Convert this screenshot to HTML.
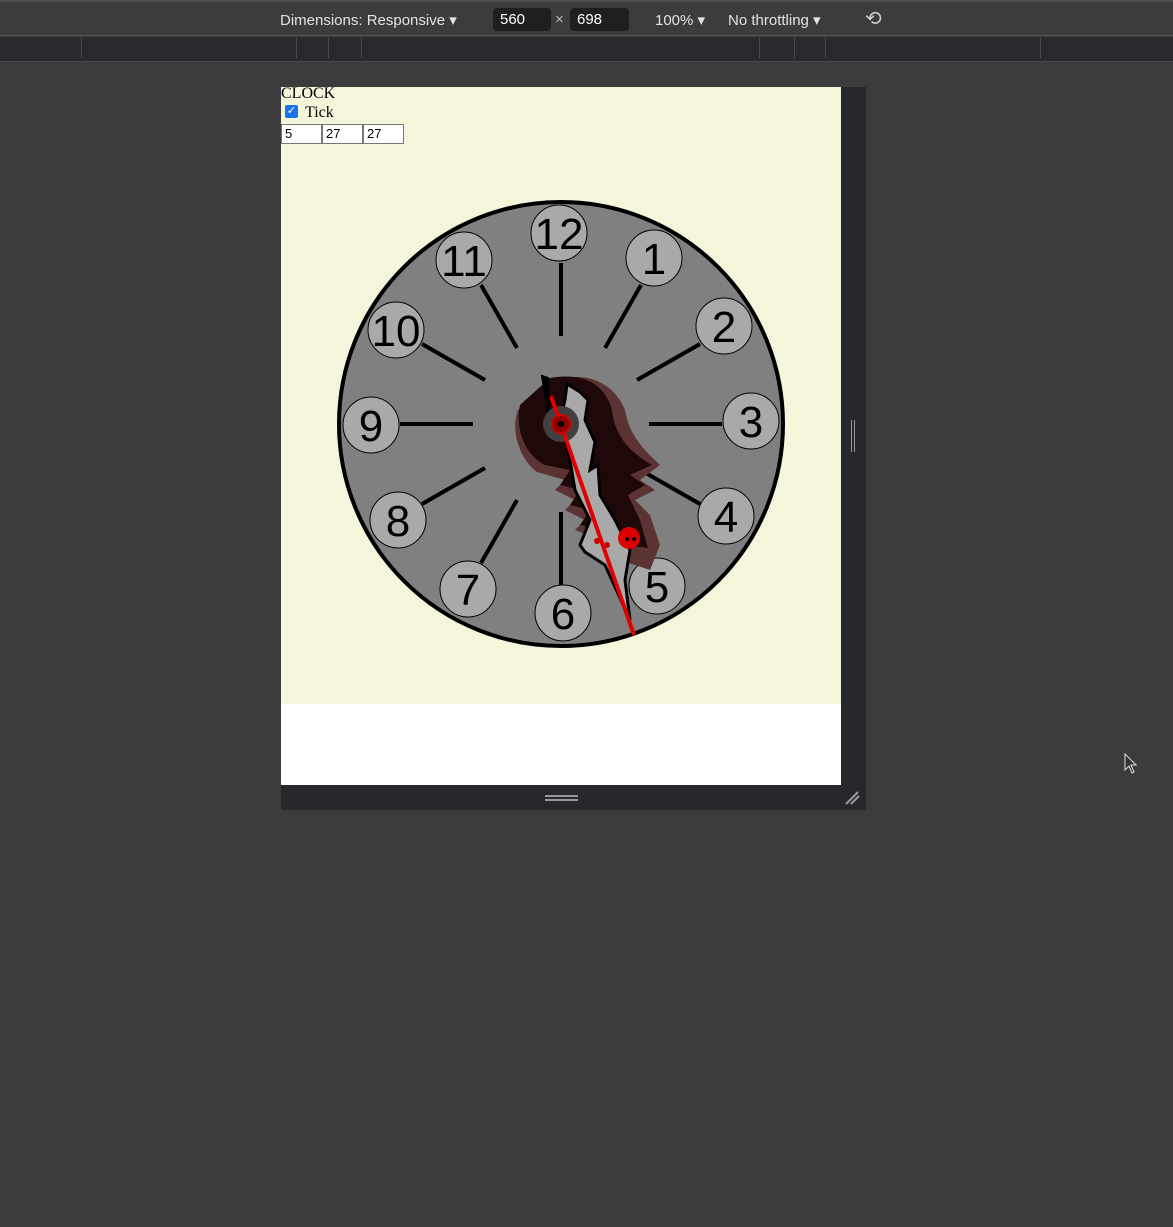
<!DOCTYPE html>
<html><head><meta charset="utf-8"><style>
body{margin:0;width:1173px;height:1227px;background:#3c3c3c;position:relative;overflow:hidden;font-family:"Liberation Sans",sans-serif}
.top{position:absolute;left:0;top:0;width:1173px;height:36px;background:#3c3c3c;border-top:2px solid #505050;box-sizing:border-box;border-bottom:1px solid #555}
.bar2{position:absolute;left:0;top:37px;width:1173px;height:24px;background:#292a2d;border-bottom:1px solid #4a4a4a}
.v{position:absolute;top:37px;width:1px;height:21px;background:#4a4a4a}
.t{position:absolute;top:11px;color:#e3e3e3;font-size:15px}
.box{position:absolute;top:8px;height:23px;background:#1f1f1f;border-radius:4px;color:#fff;font-size:15px;line-height:23px;padding-left:7px;box-sizing:border-box}
.page{position:absolute;left:281px;top:87px;width:560px;height:698px;background:#fff}
.beige{position:absolute;left:0;top:0;width:560px;height:617px;background:#f5f5dc}
.gut{position:absolute;left:841px;top:87px;width:25px;height:723px;background:#27282b}
.gutb{position:absolute;left:281px;top:785px;width:585px;height:25px;background:#27282b}
.in{position:absolute;top:37px;width:41px;height:20px;border:1px solid #767676;box-sizing:border-box;background:#fff;font:13px "Liberation Sans",sans-serif;padding-left:3px;line-height:18px}
</style></head><body>
<div class="top"></div>
<div class="bar2"></div>
<div class="v" style="left:81px"></div><div class="v" style="left:296px"></div><div class="v" style="left:328px"></div><div class="v" style="left:361px"></div><div class="v" style="left:759px"></div><div class="v" style="left:794px"></div><div class="v" style="left:825px"></div><div class="v" style="left:1040px"></div>
<div class="t" style="left:280px">Dimensions: Responsive ▾</div>
<div class="box" style="left:493px;width:58px">560</div>
<div class="t" style="left:555px;color:#bbb">×</div>
<div class="box" style="left:570px;width:59px">698</div>
<div class="t" style="left:655px">100% ▾</div>
<div class="t" style="left:728px">No throttling ▾</div>
<div class="t" style="left:865px;font-size:20px;top:6px;color:#ccc">⟲</div>
<div class="gut"></div><div class="gutb"></div>
<div style="position:absolute;left:851px;top:420px;width:2px;height:32px;border-left:1px solid #999;border-right:1px solid #999"></div>
<div style="position:absolute;left:545px;top:795px;width:33px;height:1px;border-top:2px solid #999;border-bottom:2px solid #999;height:2px"></div>
<div class="page"><div class="beige"></div>
<div style="position:absolute;left:0;top:-2px;font:16px 'Liberation Serif',serif;color:#000">CLOCK</div>
<div style="position:absolute;left:4px;top:18px;width:13px;height:13px;background:#1a73e8;border-radius:2px;color:#fff;font-size:11px;line-height:13px;text-align:center">✓</div>
<div style="position:absolute;left:24px;top:17px;font:16px 'Liberation Serif',serif">Tick</div>
<div class="in" style="left:0">5</div><div class="in" style="left:41px">27</div><div class="in" style="left:82px">27</div>
</div>
<svg style="position:absolute;left:0;top:0" width="1173" height="1227">
<circle cx="561" cy="424" r="222" fill="#808080" stroke="#000" stroke-width="4"/>
<g stroke="#000" stroke-width="4">
<line x1="561" y1="336" x2="561" y2="263"/><line x1="605" y1="348" x2="641" y2="285"/><line x1="637" y1="380" x2="700" y2="344"/><line x1="649" y1="424" x2="722" y2="424"/><line x1="637" y1="468" x2="700" y2="504"/><line x1="605" y1="500" x2="641" y2="563"/><line x1="561" y1="512" x2="561" y2="585"/><line x1="517" y1="500" x2="481" y2="563"/><line x1="485" y1="468" x2="422" y2="504"/><line x1="473" y1="424" x2="400" y2="424"/><line x1="485" y1="380" x2="422" y2="344"/><line x1="517" y1="348" x2="481" y2="285"/>
</g>
<g fill="#a9a9a9" stroke="#000" stroke-width="1">
<circle cx="559" cy="233" r="28"/><circle cx="654" cy="258" r="28"/><circle cx="724" cy="326" r="28"/><circle cx="751" cy="421" r="28"/><circle cx="726" cy="516" r="28"/><circle cx="657" cy="586" r="28"/><circle cx="563" cy="613" r="28"/><circle cx="468" cy="589" r="28"/><circle cx="398" cy="520" r="28"/><circle cx="371" cy="425" r="28"/><circle cx="396" cy="330" r="28"/><circle cx="464" cy="260" r="28"/>
</g>
<g font-family="Liberation Sans,sans-serif" font-size="44" text-anchor="middle" fill="#000">
<text x="559" y="249">12</text><text x="654" y="274">1</text><text x="724" y="342">2</text><text x="751" y="437">3</text><text x="726" y="532">4</text><text x="657" y="602">5</text><text x="563" y="629">6</text><text x="468" y="605">7</text><text x="398" y="536">8</text><text x="371" y="441">9</text><text x="396" y="346">10</text><text x="464" y="276">11</text>
</g>
<path d="M545 385 C575 370 610 375 625 410 C630 440 650 455 660 465 L640 480 L655 490 L635 500 L650 515 L660 545 L650 570 L620 560 L600 540 L575 530 L585 520 L565 510 L575 500 L555 490 L565 480 L537 472 C520 460 510 430 518 410 Z" fill="#5c3333"/>
<path d="M550 378 C585 372 605 385 612 410 C615 440 635 455 652 465 L630 475 L645 485 L628 495 L640 520 L648 548 L625 545 L600 530 L580 525 L590 510 L570 505 L580 490 L560 485 L570 470 L545 465 C525 455 515 430 520 405 Z" fill="#1f0808"/>
<path d="M542 376 L549 420 L548 378 Z" fill="#000" stroke="#000" stroke-width="2"/>
<path d="M567 384 L580 392 L588 400 L585 420 L595 442 L590 470 L598 465 L600 495 L615 520 L630 550 L625 580 L630 620 L605 565 L585 552 L580 545 L590 520 L575 490 L570 460 L560 420 L565 400 Z" fill="#a9a9a9" stroke="#000" stroke-width="3"/>
<circle cx="561" cy="424" r="18" fill="#404040"/>
<line x1="551" y1="396" x2="634" y2="635" stroke="#e00000" stroke-width="4"/>
<circle cx="561" cy="424" r="9" fill="#8b0000" stroke="#c00" stroke-width="2"/>
<circle cx="561" cy="424" r="3" fill="#000"/>
<circle cx="629" cy="538" r="11" fill="#d00"/><circle cx="627" cy="539" r="2" fill="#000"/><circle cx="634" cy="539" r="2" fill="#000"/>
<circle cx="597" cy="541" r="3" fill="#c00"/><circle cx="607" cy="545" r="3" fill="#c00"/>
<path d="M846 804 L858 792 M851 804 L859 796" stroke="#999" stroke-width="2"/>
<path d="M1125 754 L1125 770 L1129 766 L1132 773 L1134 772 L1131 765 L1136 765 Z" fill="#333" stroke="#ddd" stroke-width="1"/>
</svg>
</body></html>
